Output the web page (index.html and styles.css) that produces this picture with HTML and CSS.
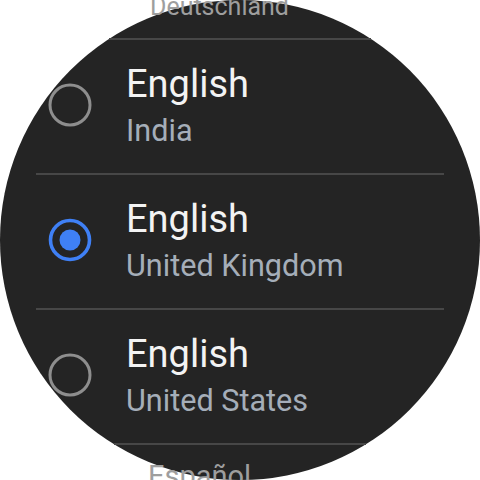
FILE: index.html
```html
<!DOCTYPE html>
<html lang="en">

<head>
  <meta charset="UTF-8" />
  <meta name="viewport" content="width=device-width, initial-scale=1.0" />
  <title>Language</title>
  <link rel="stylesheet" href="styles.css">
</head>

<body>
  <div class="watch">
    <div class="peek peek-top">Deutschland</div>
    <div class="sep sep-top"></div>

    <div class="row">
      <svg class="radio" viewBox="0 0 44 44" width="44" height="44">
        <circle cx="22" cy="22" r="20" fill="none" stroke="#8e8e8e" stroke-width="3" />
      </svg>
      <div class="label">
        <div class="title">English</div>
        <div class="sub">India</div>
      </div>
    </div>
    <div class="sep"></div>

    <div class="row">
      <svg class="radio" viewBox="0 0 44 44" width="44" height="44">
        <circle cx="22" cy="22" r="19.5" fill="none" stroke="#3f80f5" stroke-width="3.6" />
        <circle cx="22" cy="22" r="10.5" fill="#3f80f5" />
      </svg>
      <div class="label">
        <div class="title">English</div>
        <div class="sub">United Kingdom</div>
      </div>
    </div>
    <div class="sep"></div>

    <div class="row">
      <svg class="radio" viewBox="0 0 44 44" width="44" height="44">
        <circle cx="22" cy="22" r="20" fill="none" stroke="#8e8e8e" stroke-width="3" />
      </svg>
      <div class="label">
        <div class="title">English</div>
        <div class="sub">United States</div>
      </div>
    </div>
    <div class="sep sep-bottom"></div>

    <div class="peek peek-bottom">Español</div>
  </div>
</body>

</html>
```

FILE: styles.css
```css
/* Base */
html,
body {
  margin: 0;
  background: #ffffff;
  overflow: hidden;
}

body {
  font-family: 'Roboto', 'Noto Sans', sans-serif;
}

/* Round watch face */
.watch {
  width: 480px;
  height: 480px;
  border-radius: 50%;
  background-color: #242424;
  box-sizing: border-box;
  padding: 0 36px;
  display: flex;
  flex-direction: column;
}

/* Items peeking over the edge */
.peek {
  color: #9e9e9e;
  flex-shrink: 0;
}

.peek-top {
  margin-top: -8px;
  height: 30px;
  padding: 0 0 16px 114px;
  font-size: 25px;
  line-height: 30px;
}

.peek-bottom {
  margin-top: 14px;
  padding-left: 112px;
  font-size: 29px;
  line-height: 34px;
}

/* Separators */
.sep {
  height: 2px;
  background-color: #474747;
  flex-shrink: 0;
}

.sep-top {
  margin: 0 73px;
}

.sep-bottom {
  margin: 0 78px;
}

/* List rows */
.row {
  height: 133px;
  flex-shrink: 0;
  display: flex;
  align-items: center;
  padding: 0 0 3px 12px;
  box-sizing: border-box;
  gap: 34px;
}

.radio {
  flex-shrink: 0;
  display: block;
}

.title {
  color: #f3f3f3;
  font-size: 38px;
  line-height: 44px;
}

.sub {
  color: #a5aeb9;
  font-size: 30.6px;
  line-height: 34px;
  margin-top: 8px;
}
```
